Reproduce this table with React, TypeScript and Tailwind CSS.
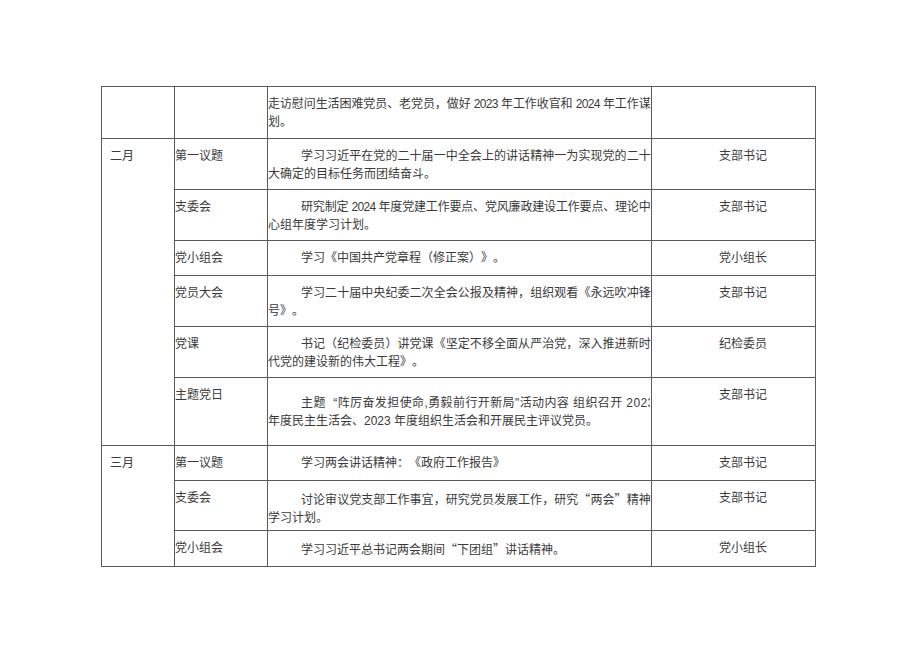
import React from "react";

type Line = { t: React.ReactNode; j?: boolean; i?: boolean; clip?: boolean };
type Row = { h: string; label: string; lines: Line[]; who: string; pt?: string };
type Group = { month: string; rows: Row[] };

const Q = ({ c }: { c: string }) => (
  <span style={{ fontFamily: '"Noto Sans CJK SC", sans-serif' }}>{c}</span>
);

const groups: Group[] = [
  {
    month: "",
    rows: [
      {
        h: "h-[52px]",
        label: "",
        who: "",
        lines: [
          { t: "走访慰问生活困难党员、老党员，做好 2023 年工作收官和 2024 年工作谋", j: true },
          { t: "划。" },
        ],
      },
    ],
  },
  {
    month: "二月",
    rows: [
      {
        h: "h-[51px]",
        label: "第一议题",
        who: "支部书记",
        lines: [
          { t: "学习习近平在党的二十届一中全会上的讲话精神一为实现党的二十", j: true, i: true },
          { t: "大确定的目标任务而团结奋斗。" },
        ],
      },
      {
        h: "h-[51px]",
        label: "支委会",
        who: "支部书记",
        lines: [
          { t: "研究制定 2024 年度党建工作要点、党风廉政建设工作要点、理论中", j: true, i: true },
          { t: "心组年度学习计划。" },
        ],
      },
      {
        h: "h-[35px]",
        label: "党小组会",
        who: "党小组长",
        lines: [{ t: "学习《中国共产党章程（修正案）》。", i: true }],
      },
      {
        h: "h-[51px]",
        label: "党员大会",
        who: "支部书记",
        lines: [
          { t: "学习二十届中央纪委二次全会公报及精神，组织观看《永远吹冲锋", j: true, i: true },
          { t: "号》。" },
        ],
      },
      {
        h: "h-[51px]",
        label: "党课",
        who: "纪检委员",
        lines: [
          { t: "书记（纪检委员）讲党课《坚定不移全面从严治党，深入推进新时", j: true, i: true },
          { t: "代党的建设新的伟大工程》。" },
        ],
      },
      {
        h: "h-[68px]",
        label: "主题党日",
        who: "支部书记",
        pt: "pt-[17px]",
        lines: [
          { t: "主题  “阵厉奋发担使命,勇毅前行开新局\"活动内容 组织召开 2023", i: true, clip: true },
          { t: "年度民主生活会、2023 年度组织生活会和开展民主评议党员。" },
        ],
      },
    ],
  },
  {
    month: "三月",
    rows: [
      {
        h: "h-[35px]",
        label: "第一议题",
        who: "支部书记",
        lines: [{ t: "学习两会讲话精神：《政府工作报告》", i: true }],
      },
      {
        h: "h-[50px]",
        label: "支委会",
        who: "支部书记",
        lines: [
          {
            t: (
              <>
                讨论审议党支部工作事宜，研究党员发展工作，研究<Q c="“" />两会<Q c="”" />精神
              </>
            ),
            j: true,
            i: true,
          },
          { t: "学习计划。" },
        ],
      },
      {
        h: "h-[36px]",
        label: "党小组会",
        who: "党小组长",
        lines: [
          {
            t: (
              <>
                学习习近平总书记两会期间<Q c="“" />下团组<Q c="”" />讲话精神。
              </>
            ),
            i: true,
          },
        ],
      },
    ],
  },
];

function Cell({ className, children }: { className: string; children?: React.ReactNode }) {
  return <div className={"shrink-0 border-l border-t border-[#5a5a5a] " + className}>{children}</div>;
}

export default function App() {
  return (
    <div
      className="w-[920px] h-[651px] overflow-hidden bg-white pt-[86px] pl-[101px] text-[12px] leading-[17.6px] text-[#3a3a3a] [text-spacing-trim:space-all]"
      style={{ fontFamily: '"Liberation Sans", "Noto Sans CJK SC", sans-serif' }}
    >
      <div className="w-[715px] border-r border-b border-[#5a5a5a]">
        {groups.map((g, gi) => (
          <div key={gi} className="flex">
            <Cell className="w-[73px] pl-[8px] pt-[9px]">{g.month}</Cell>
            <div className="flex w-[641px] flex-col">
              {g.rows.map((r, ri) => (
                <div key={ri} className={"flex " + r.h}>
                  <Cell className="w-[93px] pt-[9px]">{r.label}</Cell>
                  <Cell className={"w-[384px] pr-[1px] " + (r.pt ?? "pt-[9px]")}>
                    {r.lines.map((l, li) => (
                      <div
                        key={li}
                        className={
                          (l.i ? "pl-[33px] " : "") +
                          (l.j ? "text-justify [text-align-last:justify] tracking-[-0.7px] " : "") +
                          (l.clip ? "whitespace-pre overflow-hidden tracking-[0.4px] " : "")
                        }
                      >
                        {l.t}
                      </div>
                    ))}
                  </Cell>
                  <Cell className="w-[164px] pl-[67px] pt-[9px]">{r.who}</Cell>
                </div>
              ))}
            </div>
          </div>
        ))}
      </div>
    </div>
  );
}
